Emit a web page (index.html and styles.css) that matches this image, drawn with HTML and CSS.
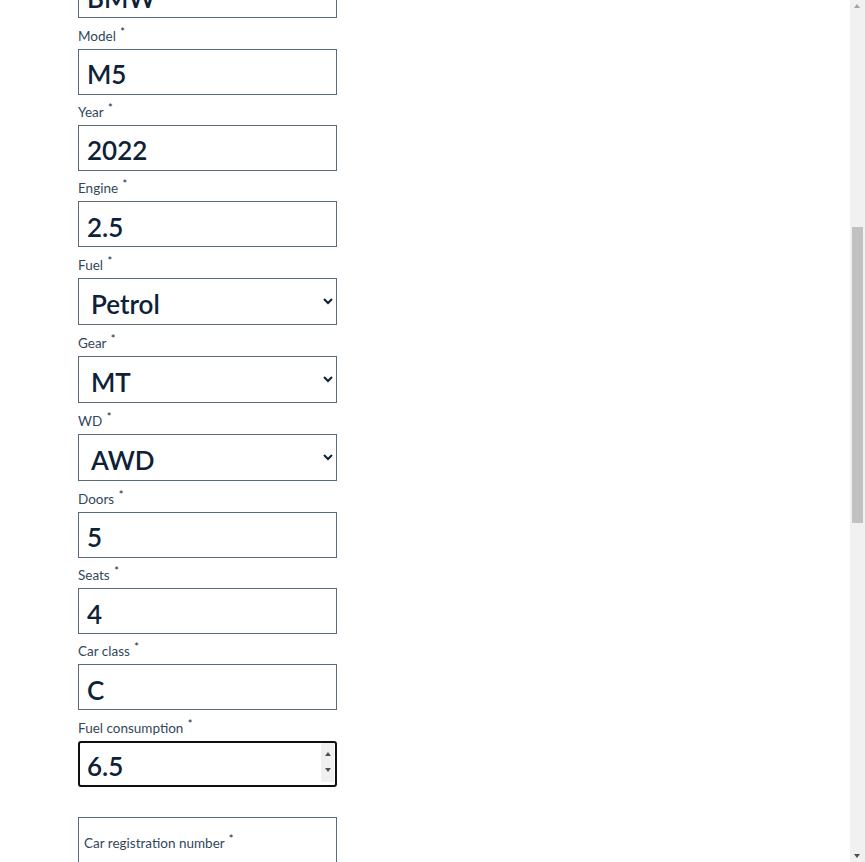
FILE: index.html
```html
<!DOCTYPE html>
<html lang="en">
<head>
<meta charset="utf-8">
<title>Add car</title>
<link rel="stylesheet" href="styles.css">
</head>
<body>
<main class="page">
  <header class="page-head">
    <h1 class="page-title">Add a new car</h1>
    <p class="page-sub">Fill in the details of the vehicle you want to list.</p>
  </header>
  <form class="car-form">
    <div class="photo-drop">Drop car photos here</div>

    <div class="field">
      <label class="lbl" for="brand">Brand <sup class="req">*</sup></label>
      <input class="inp" id="brand" type="text" value="BMW">
    </div>
    <div class="field">
      <label class="lbl" for="model">Model <sup class="req">*</sup></label>
      <input class="inp" id="model" type="text" value="M5">
    </div>
    <div class="field">
      <label class="lbl" for="year">Year <sup class="req">*</sup></label>
      <input class="inp" id="year" type="text" value="2022">
    </div>
    <div class="field">
      <label class="lbl" for="engine">Engine <sup class="req">*</sup></label>
      <input class="inp" id="engine" type="text" value="2.5">
    </div>
    <div class="field">
      <label class="lbl" for="fuel">Fuel <sup class="req">*</sup></label>
      <select class="sel" id="fuel">
        <option selected>Petrol</option>
        <option>Diesel</option>
        <option>Hybrid</option>
        <option>Electric</option>
      </select>
    </div>
    <div class="field">
      <label class="lbl" for="gear">Gear <sup class="req">*</sup></label>
      <select class="sel" id="gear">
        <option selected>MT</option>
        <option>AT</option>
      </select>
    </div>
    <div class="field">
      <label class="lbl" for="wd">WD <sup class="req">*</sup></label>
      <select class="sel" id="wd">
        <option>FWD</option>
        <option>RWD</option>
        <option selected>AWD</option>
      </select>
    </div>
    <div class="field">
      <label class="lbl" for="doors">Doors <sup class="req">*</sup></label>
      <input class="inp" id="doors" type="text" value="5">
    </div>
    <div class="field">
      <label class="lbl" for="seats">Seats <sup class="req">*</sup></label>
      <input class="inp" id="seats" type="text" value="4">
    </div>
    <div class="field">
      <label class="lbl" for="carclass">Car class <sup class="req">*</sup></label>
      <input class="inp" id="carclass" type="text" value="C">
    </div>
    <div class="field">
      <label class="lbl" for="consumption">Fuel consumption <sup class="req">*</sup></label>
      <div class="num-wrap">
        <input class="inp inp-num" id="consumption" type="number" step="0.1" value="6.5">
        <span class="spin" aria-hidden="true"><span class="spin-up"></span><span class="spin-down"></span></span>
      </div>
    </div>

    <div class="group">
      <div class="field field-in">
        <label class="lbl lbl-in" for="reg">Car registration number <sup class="req">*</sup></label>
        <input class="inp inp-in" id="reg" type="text" value="">
      </div>
      <div class="field field-in">
        <label class="lbl lbl-in" for="vin">VIN <sup class="req">*</sup></label>
        <input class="inp inp-in" id="vin" type="text" value="">
      </div>
    </div>

    <div class="field">
      <label class="lbl" for="price">Price per day <sup class="req">*</sup></label>
      <input class="inp" id="price" type="text" value="">
    </div>
    <div class="field">
      <label class="lbl" for="city">City <sup class="req">*</sup></label>
      <input class="inp" id="city" type="text" value="">
    </div>
    <div class="field">
      <label class="lbl" for="desc">Description</label>
      <textarea class="txt" id="desc"></textarea>
    </div>
    <div class="actions">
      <button class="btn" type="button">Save car</button>
    </div>
  </form>
</main>
<div class="vscroll" aria-hidden="true">
  <span class="vs-arrow vs-up"></span>
  <span class="vs-thumb"></span>
  <span class="vs-arrow vs-down"></span>
</div>
<script src="script.js"></script>
</body>
</html>
```

FILE: styles.css
```css
html, body {
  margin: 0;
  padding: 0;
  background: #ffffff;
}
body {
  font-family: Lato, "Open Sans", "Liberation Sans", sans-serif;
  color: #2b3a4a;
}
.page {
  padding: 40px 0 0 78px;
}
.page-head {
  margin-bottom: 24px;
}
.page-title {
  margin: 0 0 8px;
  font-size: 32px;
  line-height: 40px;
  color: #0d2137;
}
.page-sub {
  margin: 0;
  font-size: 14px;
  line-height: 20px;
}
.car-form {
  display: flex;
  flex-direction: column;
  width: 259px;
}
.photo-drop {
  height: 420px;
  border: 1px dashed #5b6b79;
  display: flex;
  align-items: center;
  justify-content: center;
  font-size: 13px;
}
.field {
  display: flex;
  flex-direction: column;
  margin-top: 9.33px;
}
.lbl {
  display: block;
  font-size: 13.5px;
  line-height: 17px;
  margin-bottom: 4px;
  color: #33475b;
}
.req {
  font-size: 11px;
  line-height: 0;
  vertical-align: 5px;
  margin-left: 1px;
  color: #0d2137;
}
.inp {
  box-sizing: border-box;
  width: 259px;
  height: 46px;
  margin: 0;
  border: 1px solid #5b6b79;
  border-radius: 0;
  padding: 5px 8px 0;
  font-family: Lato, "Open Sans", "Liberation Sans", sans-serif;
  font-size: 26px;
  font-weight: 600;
  color: #0d2137;
  background: #fff;
}
.inp:focus {
  outline: none;
  border: 2px solid #101010;
  border-radius: 3px;
  padding: 4px 7px 0;
}
.num-wrap {
  position: relative;
  width: 259px;
}
.inp-num {
  -moz-appearance: textfield;
}
.inp-num::-webkit-inner-spin-button,
.inp-num::-webkit-outer-spin-button {
  -webkit-appearance: none;
  margin: 0;
}
.spin {
  position: absolute;
  top: 2px;
  right: 3px;
  width: 13px;
  height: 39px;
  background: #f0f0f0;
  display: flex;
  flex-direction: column;
  align-items: center;
  justify-content: center;
  gap: 12px;
}
.spin-up,
.spin-down {
  width: 0;
  height: 0;
  border-left: 3.5px solid transparent;
  border-right: 3.5px solid transparent;
}
.spin-up {
  border-bottom: 4px solid #505050;
}
.spin-down {
  border-top: 4px solid #505050;
}
.sel {
  box-sizing: border-box;
  width: 259px;
  height: 47.7px;
  margin: 0;
  border: 1px solid #5b6b79;
  border-radius: 0;
  padding: 5px 8px 0;
  font-family: Lato, "Open Sans", "Liberation Sans", sans-serif;
  font-size: 26px;
  font-weight: 600;
  color: #0d2137;
  background-color: #fff;
}
.group {
  margin-top: 30px;
  border: 1px solid #5b6b79;
  padding: 8px 5px 12px;
}
.field-in {
  margin-top: 9px;
}
.lbl-in {
  margin-bottom: 14px;
}
.inp-in {
  width: 100%;
}
.txt {
  box-sizing: border-box;
  width: 259px;
  height: 140px;
  border: 1px solid #5b6b79;
  font-family: inherit;
  font-size: 16px;
}
.actions {
  margin-top: 24px;
  padding-bottom: 400px;
}
.btn {
  height: 44px;
  padding: 0 24px;
  border: none;
  background: #0d2137;
  color: #fff;
  font-family: inherit;
  font-size: 16px;
}

/* window scrollbar, as captured in the reference */
.vscroll {
  position: fixed;
  top: 0;
  right: 0;
  width: 15px;
  height: 100vh;
  background: #f1f1f1;
  z-index: 10;
}
.vs-thumb {
  position: absolute;
  left: 2px;
  top: 227px;
  width: 11px;
  height: 296px;
  background: #c1c1c1;
}
.vs-arrow {
  position: absolute;
  left: 4px;
  width: 0;
  height: 0;
  border-left: 3.5px solid transparent;
  border-right: 3.5px solid transparent;
}
.vs-up {
  top: 4px;
  border-bottom: 4px solid #a3a3a3;
}
.vs-down {
  bottom: 4px;
  border-top: 4px solid #505050;
}
```

FILE: script.js
```js
(function () {
  var model = document.getElementById('model');
  var r = model.getBoundingClientRect();
  window.scrollTo(0, Math.round(r.top + window.scrollY - 49));
  document.getElementById('consumption').focus({ preventScroll: true });
})();
```
